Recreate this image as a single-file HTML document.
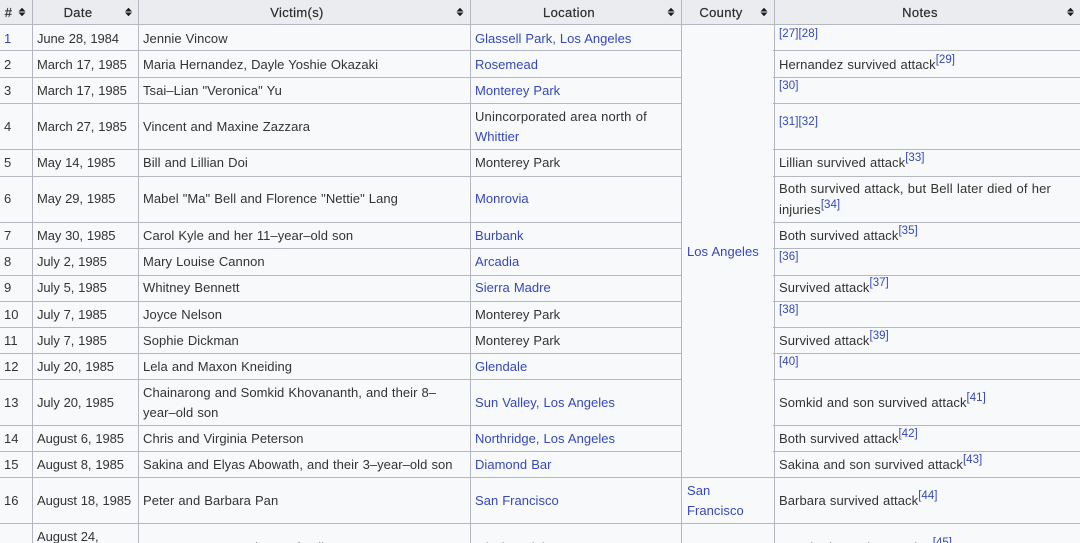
<!DOCTYPE html>
<html><head><meta charset="utf-8">
<style>
html,body{margin:0;padding:0;background:#f8f9fa}
#p{position:relative;width:1080px;height:543px;overflow:hidden;background:#f8f9fa;font-family:"Liberation Sans",sans-serif;font-size:13px;color:#333;filter:blur(.3px)}
.h{position:absolute;left:0;top:0;width:1080px;height:24px;background:#eaecf0}
.v,.r{position:absolute;background:#b4b7bf}
.v{top:0;width:1px;height:543px}
.r{height:1px;left:0;width:1080px}
.cty{position:absolute;left:682px;top:25px;width:91px;height:452px;background:#f8f9fa}
.t{position:absolute;white-space:nowrap;line-height:20px;height:20px;margin-top:1px;letter-spacing:.05px;word-spacing:.4px}
.t[style^="left:37px"]{letter-spacing:-.1px}
.t[style^="left:475px"]{letter-spacing:.02px}
.t[style^="left:779px"]{letter-spacing:.08px}
.c{transform:translateX(-50%);color:#2c2c2c;letter-spacing:.35px;-webkit-text-stroke:.2px #2c2c2c}
.a{color:#3548b8}
sup{font-size:11.500px;line-height:0;vertical-align:6px;color:#3548b8;letter-spacing:.02px}
.s{color:#3548b8;font-size:11.500px}
svg{position:absolute}
</style></head><body><div id="p">
<div class="h"></div>

<div class="r" style="top:24px"></div>
<div class="r" style="top:50px"></div>
<div class="r" style="top:77px"></div>
<div class="r" style="top:103px"></div>
<div class="r" style="top:149px"></div>
<div class="r" style="top:176px"></div>
<div class="r" style="top:222px"></div>
<div class="r" style="top:248px"></div>
<div class="r" style="top:275px"></div>
<div class="r" style="top:301px"></div>
<div class="r" style="top:327px"></div>
<div class="r" style="top:353px"></div>
<div class="r" style="top:379px"></div>
<div class="r" style="top:425px"></div>
<div class="r" style="top:451px"></div>
<div class="r" style="top:477px"></div>
<div class="r" style="top:523px"></div>
<div class="cty"></div>

<div class="v" style="left:32px"></div>
<div class="v" style="left:138px"></div>
<div class="v" style="left:470px"></div>
<div class="v" style="left:681px"></div>
<div class="v" style="left:774px"></div>

<svg style="left:0;top:0" width="1080" height="24" fill="#1c1c1c">
<path d="M18.500 11.500l3.500-3.800 3.500 3.800zM18.500 12.500l3.500 3.800 3.500-3.800z"/>
<path d="M125 11.500l3.500-3.800 3.500 3.800zM125 12.500l3.500 3.800 3.500-3.800z"/>
<path d="M456.500 11.500l3.500-3.800 3.500 3.800zM456.500 12.500l3.500 3.800 3.500-3.800z"/>
<path d="M667.500 11.500l3.500-3.800 3.500 3.800zM667.500 12.500l3.500 3.800 3.500-3.800z"/>
<path d="M760.500 11.500l3.500-3.800 3.500 3.800zM760.500 12.500l3.500 3.800 3.500-3.800z"/>
<path d="M1067 11.500l3.500-3.800 3.500 3.800zM1067 12.500l3.500 3.800 3.500-3.800z"/>
</svg>

<div class="t c" style="left:8.500px;top:2px">#</div>
<div class="t c" style="left:78px;top:2px">Date</div>
<div class="t c" style="left:297px;top:2px">Victim(s)</div>
<div class="t c" style="left:569px;top:2px">Location</div>
<div class="t c" style="left:721px;top:2px">County</div>
<div class="t c" style="left:920px;top:2px">Notes</div>

<div class="t a" style="left:4px;top:28px">1</div><div class="t" style="left:37px;top:28px">June 28, 1984</div><div class="t" style="left:143px;top:28px">Jennie Vincow</div><div class="t a" style="left:475px;top:28px">Glassell Park, Los Angeles</div><div class="t s" style="left:779px;top:23px">[27][28]</div>

<div class="t" style="left:4px;top:54px">2</div><div class="t" style="left:37px;top:54px">March 17, 1985</div><div class="t" style="left:143px;top:54px;letter-spacing:.02px">Maria Hernandez, Dayle Yoshie Okazaki</div><div class="t a" style="left:475px;top:54px">Rosemead</div><div class="t" style="left:779px;top:54px">Hernandez survived attack<sup>[29]</sup></div>

<div class="t" style="left:4px;top:80px">3</div><div class="t" style="left:37px;top:80px">March 17, 1985</div><div class="t" style="left:143px;top:80px">Tsai–Lian "Veronica" Yu</div><div class="t a" style="left:475px;top:80px">Monterey Park</div><div class="t s" style="left:779px;top:75px">[30]</div>

<div class="t" style="left:4px;top:116px">4</div><div class="t" style="left:37px;top:116px">March 27, 1985</div><div class="t" style="left:143px;top:116px">Vincent and Maxine Zazzara</div><div class="t" style="left:475px;top:106px;letter-spacing:.16px">Unincorporated area north of</div><div class="t a" style="left:475px;top:126px">Whittier</div><div class="t s" style="left:779px;top:111px">[31][32]</div>

<div class="t" style="left:4px;top:152px">5</div><div class="t" style="left:37px;top:152px">May 14, 1985</div><div class="t" style="left:143px;top:152px">Bill and Lillian Doi</div><div class="t" style="left:475px;top:152px">Monterey Park</div><div class="t" style="left:779px;top:152px">Lillian survived attack<sup>[33]</sup></div>

<div class="t" style="left:4px;top:188px">6</div><div class="t" style="left:37px;top:188px">May 29, 1985</div><div class="t" style="left:143px;top:188px">Mabel "Ma" Bell and Florence "Nettie" Lang</div><div class="t a" style="left:475px;top:188px">Monrovia</div><div class="t" style="left:779px;top:178px;letter-spacing:.15px;word-spacing:.4px">Both survived attack, but Bell later died of her</div><div class="t" style="left:779px;top:199px">injuries<sup>[34]</sup></div>

<div class="t" style="left:4px;top:225px">7</div><div class="t" style="left:37px;top:225px">May 30, 1985</div><div class="t" style="left:143px;top:225px">Carol Kyle and her 11–year–old son</div><div class="t a" style="left:475px;top:225px">Burbank</div><div class="t" style="left:779px;top:225px">Both survived attack<sup>[35]</sup></div>

<div class="t" style="left:4px;top:251px">8</div><div class="t" style="left:37px;top:251px">July 2, 1985</div><div class="t" style="left:143px;top:251px">Mary Louise Cannon</div><div class="t a" style="left:475px;top:251px">Arcadia</div><div class="t s" style="left:779px;top:246px">[36]</div>

<div class="t" style="left:4px;top:277px">9</div><div class="t" style="left:37px;top:277px">July 5, 1985</div><div class="t" style="left:143px;top:277px">Whitney Bennett</div><div class="t a" style="left:475px;top:277px">Sierra Madre</div><div class="t" style="left:779px;top:277px">Survived attack<sup>[37]</sup></div>

<div class="t" style="left:4px;top:304px">10</div><div class="t" style="left:37px;top:304px">July 7, 1985</div><div class="t" style="left:143px;top:304px">Joyce Nelson</div><div class="t" style="left:475px;top:304px">Monterey Park</div><div class="t s" style="left:779px;top:299px">[38]</div>

<div class="t" style="left:4px;top:330px">11</div><div class="t" style="left:37px;top:330px">July 7, 1985</div><div class="t" style="left:143px;top:330px">Sophie Dickman</div><div class="t" style="left:475px;top:330px">Monterey Park</div><div class="t" style="left:779px;top:330px">Survived attack<sup>[39]</sup></div>

<div class="t" style="left:4px;top:356px">12</div><div class="t" style="left:37px;top:356px">July 20, 1985</div><div class="t" style="left:143px;top:356px">Lela and Maxon Kneiding</div><div class="t a" style="left:475px;top:356px">Glendale</div><div class="t s" style="left:779px;top:351px">[40]</div>

<div class="t" style="left:4px;top:392px">13</div><div class="t" style="left:37px;top:392px">July 20, 1985</div><div class="t" style="left:143px;top:382px">Chainarong and Somkid Khovananth, and their 8–</div><div class="t" style="left:143px;top:402px">year–old son</div><div class="t a" style="left:475px;top:392px">Sun Valley, Los Angeles</div><div class="t" style="left:779px;top:392px">Somkid and son survived attack<sup>[41]</sup></div>

<div class="t" style="left:4px;top:428px">14</div><div class="t" style="left:37px;top:428px">August 6, 1985</div><div class="t" style="left:143px;top:428px">Chris and Virginia Peterson</div><div class="t a" style="left:475px;top:428px">Northridge, Los Angeles</div><div class="t" style="left:779px;top:428px">Both survived attack<sup>[42]</sup></div>

<div class="t" style="left:4px;top:454px">15</div><div class="t" style="left:37px;top:454px">August 8, 1985</div><div class="t" style="left:143px;top:454px">Sakina and Elyas Abowath, and their 3–year–old son</div><div class="t a" style="left:475px;top:454px">Diamond Bar</div><div class="t" style="left:779px;top:454px">Sakina and son survived attack<sup>[43]</sup></div>

<div class="t" style="left:4px;top:490px">16</div><div class="t" style="left:37px;top:490px">August 18, 1985</div><div class="t" style="left:143px;top:490px">Peter and Barbara Pan</div><div class="t a" style="left:475px;top:490px">San Francisco</div><div class="t a" style="left:687px;top:480px">San</div><div class="t a" style="left:687px;top:500px">Francisco</div><div class="t" style="left:779px;top:490px">Barbara survived attack<sup>[44]</sup></div>

<div class="t a" style="left:687px;top:241px">Los Angeles</div>

<div class="t" style="left:37px;top:526px">August 24,</div>
<div class="t" style="left:4px;top:537px">17</div>
<div class="t" style="left:143px;top:537px">James Romero and son's family</div>
<div class="t a" style="left:475px;top:537px">Mission Viejo</div>
<div class="t" style="left:779px;top:537px;letter-spacing:.35px;word-spacing:1px">Attacked attack on Asian<sup>[45]</sup></div>
</div></body></html>
